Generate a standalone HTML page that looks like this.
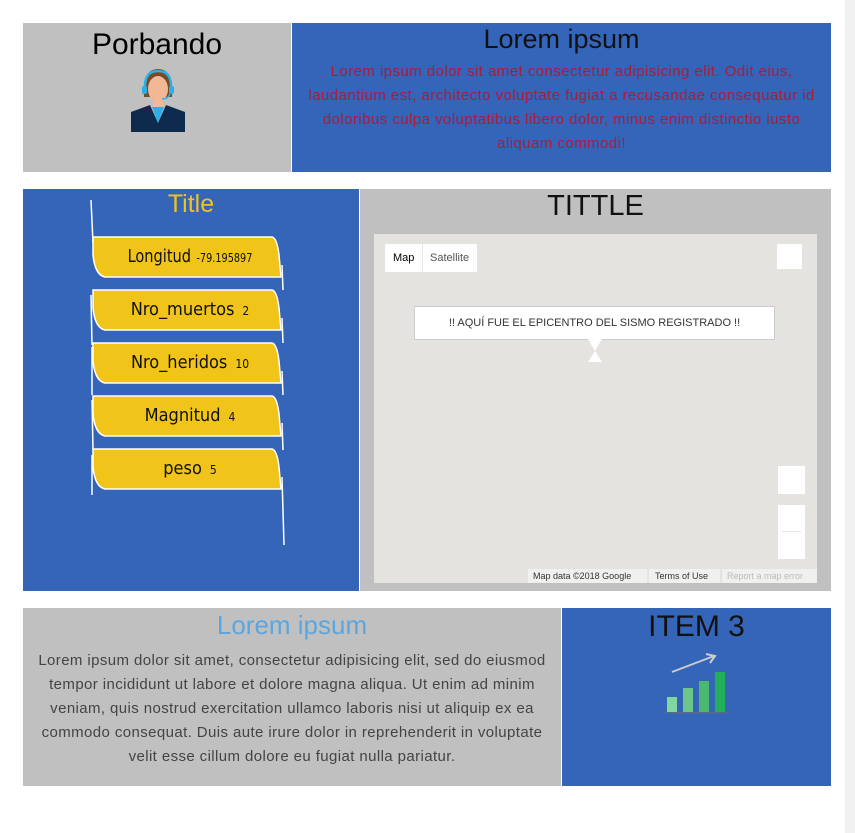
<!DOCTYPE html>
<html><head><meta charset="utf-8"><style>
body{margin:0;width:855px;height:833px;background:#fff;position:relative;overflow:hidden;font-family:"Liberation Sans",sans-serif}
.a{position:absolute}
.g{background:#c0c0c0}.b{background:#3465b9}
.c{text-align:center}
.nw{white-space:nowrap}
</style></head><body>
<div class="a g" style="left:23px;top:23px;width:268px;height:149px"></div>
<div class="a c" style="left:23px;top:28px;width:268px;font-size:30px;color:#000">Porbando</div>
<svg class="a" style="left:130px;top:67px" width="56" height="65" viewBox="0 0 56 65">
<path d="M14 30 Q12 2 28 2 Q44 2 42 30 Z" fill="#7a4a22"/>
<ellipse cx="28" cy="22" rx="10" ry="13" fill="#f2b896"/>
<path d="M18 14 Q28 2 38 16 Q36 8 28 5 Q19 6 18 14Z" fill="#7a4a22"/>
<path d="M15 22 Q14 4 28 4 Q42 4 41 22" fill="none" stroke="#2ab0e8" stroke-width="2.5"/>
<rect x="12" y="19" width="5" height="8" rx="2" fill="#2ab0e8"/><rect x="39" y="19" width="5" height="8" rx="2" fill="#2ab0e8"/>
<path d="M40 27 Q38 32 32 32" stroke="#2ab0e8" stroke-width="1.5" fill="none"/>
<rect x="23" y="33" width="10" height="8" fill="#f2b896"/>
<path d="M1 45 L20 38 L28 56 L36 38 L55 45 L55 65 L1 65Z" fill="#0e2a4d"/>
<path d="M22 40 L28 56 L34 40Z" fill="#2ab0e8"/>
</svg>
<div class="a b" style="left:292px;top:23px;width:539px;height:149px"></div>
<div class="a c" style="left:292px;top:24px;width:539px;font-size:27px;color:#111">Lorem ipsum</div>
<div class="a c nw" style="left:292px;top:60px;width:539px;font-size:15px;line-height:24px;color:#a81c3c;letter-spacing:0.45px">Lorem ipsum dolor sit amet consectetur adipisicing elit. Odit eius,<br>laudantium est, architecto voluptate fugiat a recusandae consequatur id<br>doloribus culpa voluptatibus libero dolor, minus enim distinctio iusto<br>aliquam commodi!</div>

<div class="a b" style="left:23px;top:189px;width:336px;height:402px"></div>
<div class="a c" style="left:23px;top:190px;width:336px;font-size:25px;color:#f0c419">Title</div>
<svg class="a" style="left:80px;top:195px" width="220" height="360" viewBox="0 0 220 360">
<g fill="none" stroke="#fff" stroke-width="1.5">
<path d="M11 5 L13 48 M11 100 L12 150 M12 152 L12 200 M12 205 L13 255 M12 260 L12 300"/>
<path d="M202 70 L203 95 M202 123 L203 148 M202 176 L203 200 M202 228 L203 255 M202 282 L204 350"/>
</g>
<g fill="#f0c419" stroke="#fff" stroke-width="1.5">
<path d="M13 42 L192 42 Q197 43 199 60 L201 82 L25 82 Q15 80 13 60 Z"/>
<path d="M13 95 L192 95 Q197 96 199 113 L201 135 L25 135 Q15 133 13 113 Z"/>
<path d="M13 148 L192 148 Q197 149 199 166 L201 188 L25 188 Q15 186 13 166 Z"/>
<path d="M13 201 L192 201 Q197 202 199 219 L201 241 L25 241 Q15 239 13 219 Z"/>
<path d="M13 254 L192 254 Q197 255 199 272 L201 294 L25 294 Q15 292 13 272 Z"/>
</g>
<g font-family="'DejaVu Sans Condensed',sans-serif" fill="#111" text-anchor="middle">
<text x="110" y="67" font-size="18" transform="translate(110 0) scale(0.9 1) translate(-110 0)"><tspan>Longitud</tspan><tspan font-size="12" dx="6">-79.195897</tspan></text>
<text x="110" y="120" font-size="18"><tspan>Nro_muertos</tspan><tspan font-size="12" dx="8">2</tspan></text>
<text x="110" y="173" font-size="18"><tspan>Nro_heridos</tspan><tspan font-size="12" dx="8">10</tspan></text>
<text x="110" y="226" font-size="18"><tspan>Magnitud</tspan><tspan font-size="12" dx="8">4</tspan></text>
<text x="110" y="279" font-size="18"><tspan>peso</tspan><tspan font-size="12" dx="8">5</tspan></text>
</g>
</svg>

<div class="a g" style="left:360px;top:189px;width:471px;height:402px"></div>
<div class="a c" style="left:360px;top:190px;width:471px;font-size:29px;color:#111">TITTLE</div>
<div class="a" style="left:374px;top:234px;width:443px;height:349px;background:#e5e3df"></div>
<div class="a" style="left:385px;top:244px;width:92px;height:28px;background:#fff;font-size:11px;line-height:28px"><span style="position:absolute;left:8px;color:#000">Map</span><span style="position:absolute;left:37px;top:0;width:1px;height:28px;background:#e6e6e6"></span><span style="position:absolute;left:45px;color:#555">Satellite</span></div>
<div class="a" style="left:777px;top:244px;width:25px;height:25px;background:#fff"></div>
<div class="a c" style="left:414px;top:306px;width:361px;height:34px;background:#fff;border:1px solid #ccc;box-sizing:border-box;font-size:11px;line-height:32px;color:#333">!! AQUÍ FUE EL EPICENTRO DEL SISMO REGISTRADO !!</div>
<svg class="a" style="left:585px;top:339px" width="20" height="24"><path d="M3 0 L10 12 L3 23 L17 23 L10 12 L17 0Z" fill="#fff"/></svg>
<div class="a" style="left:778px;top:466px;width:27px;height:28px;background:#fff"></div>
<div class="a" style="left:778px;top:505px;width:27px;height:54px;background:#fff"><div style="position:absolute;left:4px;top:26px;width:19px;height:1px;background:#e6e6e6"></div></div>
<div class="a" style="left:528px;top:569px;width:289px;height:14px;background:#f0f0ee;font-size:9px;line-height:14px;color:#333;white-space:nowrap"><span style="position:absolute;left:5px">Map data ©2018 Google</span><span style="position:absolute;left:119px;width:2px;height:14px;background:#e5e3df"></span><span style="position:absolute;left:127px">Terms of Use</span><span style="position:absolute;left:192px;width:2px;height:14px;background:#e5e3df"></span><span style="position:absolute;left:199px;color:#bbb">Report a map error</span></div>

<div class="a g" style="left:23px;top:608px;width:538px;height:178px"></div>
<div class="a c" style="left:23px;top:610px;width:538px;font-size:26px;color:#5ba6e0">Lorem ipsum</div>
<div class="a c nw" style="left:23px;top:649px;width:538px;font-size:15px;line-height:24px;color:#444;letter-spacing:0.4px">Lorem ipsum dolor sit amet, consectetur adipisicing elit, sed do eiusmod<br>tempor incididunt ut labore et dolore magna aliqua. Ut enim ad minim<br>veniam, quis nostrud exercitation ullamco laboris nisi ut aliquip ex ea<br>commodo consequat. Duis aute irure dolor in reprehenderit in voluptate<br>velit esse cillum dolore eu fugiat nulla pariatur.</div>
<div class="a b" style="left:562px;top:608px;width:269px;height:178px"></div>
<div class="a c" style="left:562px;top:610px;width:269px;font-size:30px;color:#111">ITEM 3</div>
<svg class="a" style="left:664px;top:652px" width="64" height="64" viewBox="0 0 64 64">
<path d="M8 20 L50 4 M42 2 L51 4 L46 11" stroke="#ccc" stroke-width="2" fill="none"/>
<rect x="3" y="45" width="10" height="15" fill="#82d6a0"/>
<rect x="19" y="36" width="10" height="24" fill="#6cc68a"/>
<rect x="35" y="29" width="10" height="31" fill="#4bb970"/>
<rect x="51" y="20" width="10" height="40" fill="#23ae5a"/>
<rect x="1" y="60" width="62" height="1.5" fill="#5a6a80"/>
</svg>
<div class="a" style="left:845px;top:0;width:10px;height:833px;background:#f1f1f1"></div>
</body></html>
